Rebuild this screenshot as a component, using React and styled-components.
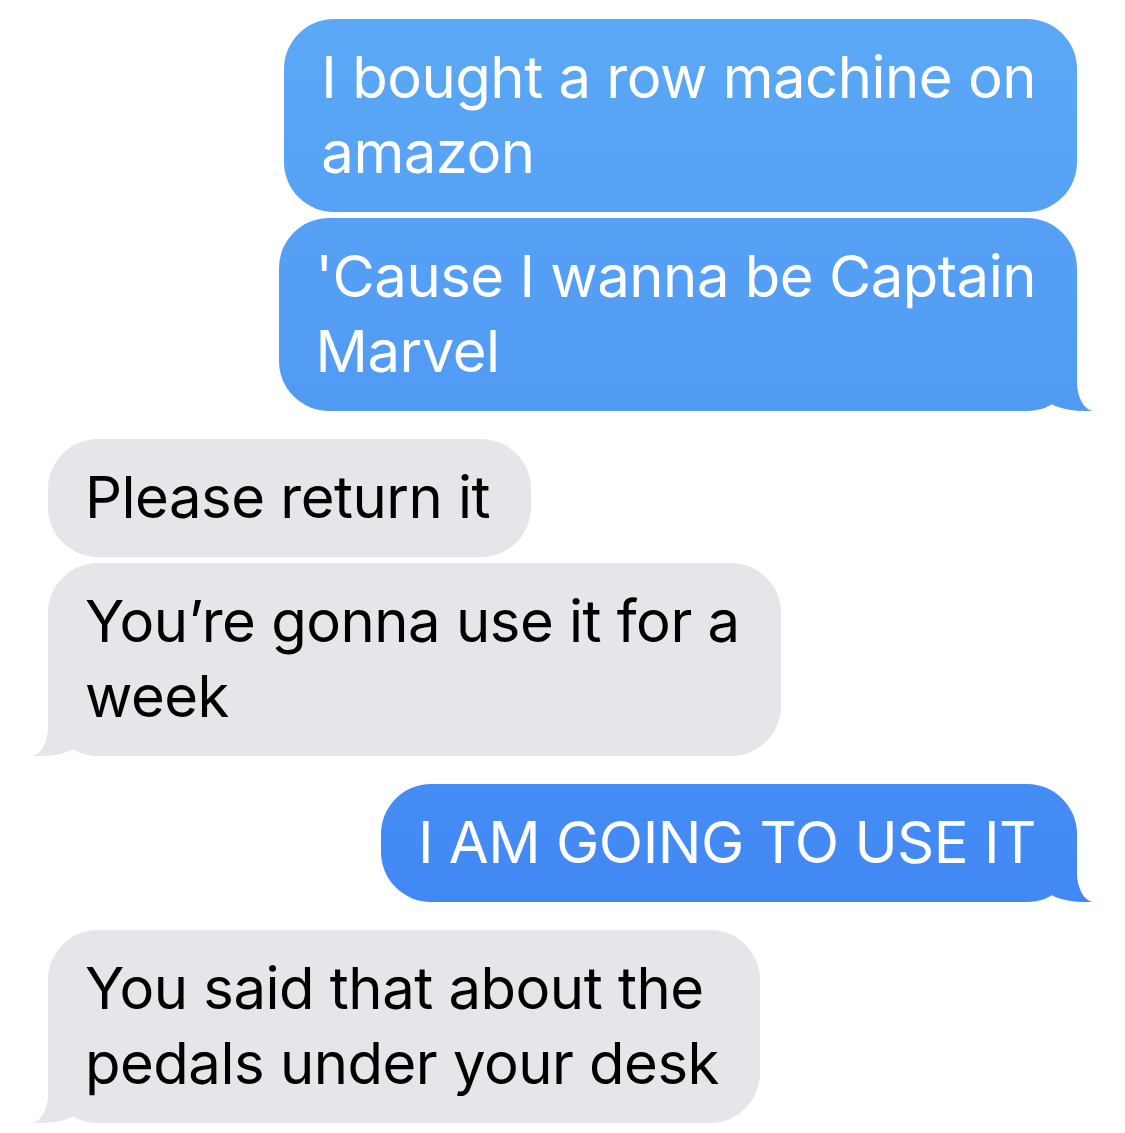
import React from 'react';
import styled, { createGlobalStyle, css } from 'styled-components';

const GlobalStyle = createGlobalStyle`
  html, body {
    margin: 0;
    padding: 0;
    background: #ffffff;
  }
  body {
    font-family: Inter, "Noto Sans", sans-serif;
    -webkit-font-smoothing: antialiased;
  }
`;

const blueGradient = 'linear-gradient(180deg, #5ba9f6 0px, #4f97f4 500px, #3a7ff5 1133px)';

const Thread = styled.div`
  display: flex;
  flex-direction: column;
  padding: 19px 48px 8px 48px;
`;

const Group = styled.div`
  display: flex;
  flex-direction: column;
  align-items: ${(p) => (p.$mine ? 'flex-end' : 'flex-start')};
  gap: 6px;
  & + & {
    margin-top: 28px;
  }
`;

const rightTail = css`
  &::before {
    content: '';
    position: absolute;
    right: -16px;
    bottom: 0;
    width: 50px;
    height: 50px;
    background: inherit;
    background-attachment: fixed;
    border-bottom-left-radius: 42px 17px;
  }
  &::after {
    content: '';
    position: absolute;
    right: -40px;
    bottom: 0;
    width: 40px;
    height: 54px;
    background: #ffffff;
    border-bottom-left-radius: 17px 29px;
  }
`;

const leftTail = css`
  &::before {
    content: '';
    position: absolute;
    left: -16px;
    bottom: 0;
    width: 50px;
    height: 50px;
    background: #e5e5ea;
    border-bottom-right-radius: 42px 17px;
  }
  &::after {
    content: '';
    position: absolute;
    left: -40px;
    bottom: 0;
    width: 40px;
    height: 54px;
    background: #ffffff;
    border-bottom-right-radius: 17px 29px;
  }
`;

const Bubble = styled.div`
  position: relative;
  box-sizing: border-box;
  padding: 21px 41px 22px 37px;
  border-radius: 50px;
  font-size: 58px;
  line-height: 75px;
  letter-spacing: -0.5px;
  white-space: pre-line;
  color: ${(p) => (p.$mine ? '#ffffff' : '#000000')};
  background: ${(p) => (p.$mine ? blueGradient : '#e5e5ea')};
  background-attachment: fixed;
  ${(p) => p.$tail && (p.$mine ? rightTail : leftTail)}
`;

const Text = styled.span`
  position: relative;
  z-index: 1;
`;

const messages = [
  { mine: true, lines: ['I bought a row machine on\namazon', "'Cause I wanna be Captain\nMarvel"] },
  { mine: false, lines: ['Please return it', 'You\u2019re gonna use it for a\nweek'] },
  { mine: true, lines: ['I AM GOING TO USE IT'] },
  { mine: false, lines: ['You said that about the\npedals under your desk'] },
];

export default function App() {
  return (
    <>
      <GlobalStyle />
      <Thread>
        {messages.map((group, gi) => (
          <Group key={gi} $mine={group.mine}>
            {group.lines.map((text, i) => (
              <Bubble key={i} $mine={group.mine} $tail={i === group.lines.length - 1}>
                <Text>{text}</Text>
              </Bubble>
            ))}
          </Group>
        ))}
      </Thread>
    </>
  );
}
